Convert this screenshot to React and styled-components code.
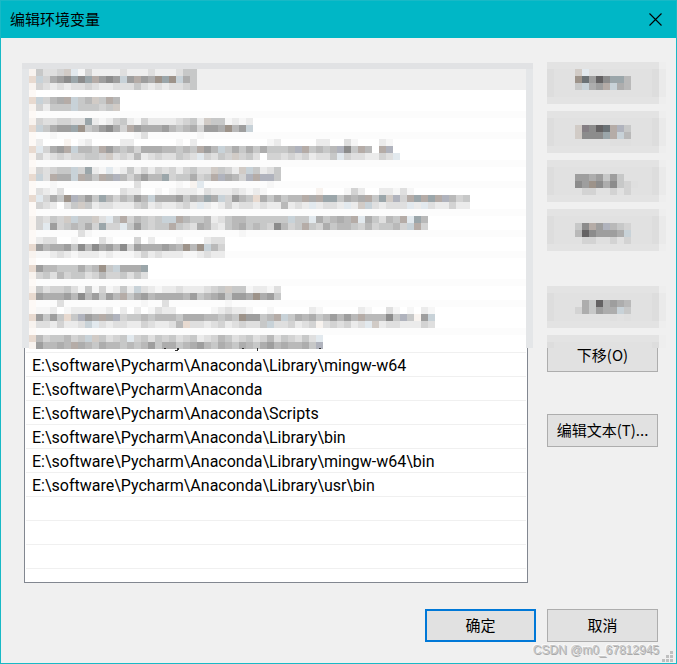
import React from 'react';
import styled, { createGlobalStyle } from 'styled-components';

const GlobalStyle = createGlobalStyle`
  * {
    box-sizing: border-box;
  }
  body {
    margin: 0;
    color: #000;
    font-family: 'Noto Sans CJK SC', 'Noto Sans', sans-serif;
    font-size: 15px;
  }
`;

const Dialog = styled.section`
  position: relative;
  display: flex;
  flex-direction: column;
  min-height: 100vh;
  background: #f0f0f0;
  border: 1px solid #18b9c6;
`;

const TitleBar = styled.header`
  display: flex;
  align-items: center;
  justify-content: space-between;
  height: 37px;
  padding: 0 8px 0 9px;
  background: #00b7c6;
  h1 {
    margin: 0;
    padding-bottom: 2px;
    font-size: 15px;
    font-weight: normal;
    line-height: 20px;
  }
`;

const CloseButton = styled.button`
  display: flex;
  padding: 6px;
  border: 0;
  background: transparent;
`;

const Content = styled.div`
  flex: 1;
  display: flex;
  gap: 19px;
  padding: 24px 18px 0 23px;
`;

const ListFrame = styled.div`
  position: relative;
  flex: 1;
  display: flex;
  margin-top: 2px;
`;

const PathList = styled.ul`
  flex: 1;
  margin: 0;
  padding: 0 1px;
  list-style: none;
  background: #fff;
  border: 1px solid #828790;
`;

const PathRow = styled.li`
  height: 24px;
  padding: 1px 0 0 6px;
  border-bottom: 1px solid #f0f0f0;
  font-family: Roboto, 'Noto Sans CJK SC', sans-serif;
  font-size: 16px;
  line-height: 24px;
  white-space: nowrap;
`;

// pixelated cover over the first rows of the list
const ListMosaic = styled.div`
  position: absolute;
  top: -1px;
  left: -2px;
  right: -5px;
  height: 288px;
  svg {
    display: block;
    width: 100%;
    height: 100%;
  }
`;

const SideColumn = styled.div`
  display: flex;
  flex-direction: column;
  gap: 7px;
  width: 111px;
`;

const DialogButton = styled.button`
  width: 111px;
  height: 33px;
  padding: 0 0 2px;
  background: #e1e1e1;
  border: ${({ $primary }) => ($primary ? '2px solid #0078d7' : '1px solid #adadad')};
  color: #000;
  font-family: inherit;
  font-size: 15px;
  line-height: 20px;
`;

const CoveredButton = styled.button`
  width: 119px;
  height: 42px;
  padding: 0;
  border: 0;
  background: transparent;
  svg {
    display: block;
  }
`;

const MoveUpSlot = styled.div`
  display: flex;
  margin-top: 28px;
`;

const MoveDownSlot = styled.div`
  position: relative;
  display: flex;
  margin: 4px 0 35px;
  > svg {
    position: absolute;
    top: -4px;
    left: 0;
  }
`;

const Footer = styled.footer`
  display: flex;
  justify-content: flex-end;
  gap: 11px;
  padding: 26px 18px 21px;
`;

const Watermark = styled.span`
  position: absolute;
  right: 17px;
  bottom: 5px;
  color: #c4c4c4;
  font-family: 'Liberation Sans', sans-serif;
  font-size: 12px;
  line-height: 16px;
  text-shadow: 1px 1px 0 #aaa, -1px -1px 0 #fafafa;
`;

const Grip = styled.svg`
  position: absolute;
  right: 3px;
  bottom: 1px;
`;

const CELL = 7;

const shades = {
  1: '#f6f6f6',
  2: '#ebebeb',
  3: '#dfdfdf',
  4: '#d3d3d3',
  5: '#c7c8c8',
  6: '#b9b9b9',
  7: '#adadad',
  8: '#9e9e9e',
  9: '#8c8c8c',
  p: '#f8f3ef',
  o: '#e8dad0',
  k: '#d1cbc6',
  w: '#b5aca7',
  d: '#9d938a',
  c: '#e2e9ee',
  b: '#c8d2d8',
  s: '#9ba6aa',
  v: '#b0b3bd',
  Z: '#857f84',
  Y: '#6b7276',
  X: '#646263',
};

// [grid row, shade of each cell]
const listCells = [
  [1, 'p5334kc14....3...3...355'],
  [2, 'ob4789s9sw898b8w87dsdb75'],
  [3, 'p43232334322333532323345'],
  [5, 'ob467wb56k5w6'],
  [6, 'p42555b55545k'],
  [8, 'p4334433s2124521422223452k551212'],
  [9, 'ob5788sd568974w8777865674887d68b'],
  [10, '...1...........13.......1'],
  [11, '.2...p.12....22......1.2..........12.....22..31...21'],
  [12, 'oc478wb665w8656477766565w86b5757575556vw5656v95w6.wv'],
  [13, 'p4234344554k343623433543c4354k453.4434342335c4332243c'],
  [15, 'p43455b4s21c12524243424533k542kb5235'],
  [16, 'ob3w77bw75w7v646866s455745wv764vwvv5'],
  [17, '...1...........3.....1.pc.........1'],
  [18, '.3213........322..1.12221322232121.......p...142..22131'],
  [19, 'oc475dv685s646586b7778576s7b4865o757566w7wss5767w5skv4wswswv645'],
  [20, '.432.35k5233222452322342c212423323226232c2332c2kb32333c2c322422'],
  [22, 'p4354kb55k3c5w46545bbw655623566555555b55c75676wc75365wcs6'],
  [23, 'p4c8456574s44c585455w543763256756549645w54756654645564bw4'],
  [24, '.......31.....................1'],
  [25, '.233..1...31...4.2...1...233'],
  [26, 'o867785969786948777876d6db64'],
  [27, 'p112321222121112423222112322'],
  [29, 'o866555756d5b777s'],
  [30, 'p4536455346445353'],
  [32, 'p53445315141252b321223222345k5512213'],
  [33, 'o877786968586w578677776856785887d785'],
  [34, '....3...........1..3........1'],
  [35, '.112.1222112.2.2.1322.....123221..1.....21.....21..31.1.21'],
  [36, 'o8585o5v87w7v45565666577766565d8856wb5767568686w66695v5p8b'],
  [37, 'p3324223bc323322432236o33234234335b334234p343423ck23322243'],
  [39, 'o6455645bk5345c45354534523465345346354353c'],
  [40, 'p86676w7657665656857756786576576578676675v'],
];

// separators between rows, blurred to full cells
const softBands = [7, 10, 14, 17, 21, 24, 27, 31, 34, 38];

const coveredButtons = [
  [[1, 'kc33'], [2, 'dY8X9ss6'], [3, '5b78wb76']],
  [[2, 'kZ9XYwv5'], [3, 'k999swb6'], [4, '.....333']],
  [[2, '8878585'], [3, '98d979543'], [4, '.44..4.4']],
  [[2, '59w8v654'], [3, '6X98887b'], [4, '.44334.4']],
];
const moveUpCells = [[2, '.75X7876'], [3, '475877b5'], [4, '.....3.3']];

const paths = [
  'E:\\software\\Pycharm\\Anaconda\\Library\\mingw-w64',
  'E:\\software\\Pycharm\\Anaconda',
  'E:\\software\\Pycharm\\Anaconda\\Scripts',
  'E:\\software\\Pycharm\\Anaconda\\Library\\bin',
  'E:\\software\\Pycharm\\Anaconda\\Library\\mingw-w64\\bin',
  'E:\\software\\Pycharm\\Anaconda\\Library\\usr\\bin',
];

const Cells = ({ rows, x, y }) =>
  rows.map(([row, cells]) =>
    [...cells].map((c, i) =>
      shades[c] ? (
        <rect
          key={`${row}-${i}`}
          x={x + i * CELL}
          y={y + row * CELL}
          width={CELL}
          height={CELL}
          fill={shades[c]}
        />
      ) : null
    )
  );

const CoveredListRows = () => (
  <ListMosaic>
    <svg aria-hidden="true" shapeRendering="crispEdges">
      <rect width="100%" height="285" fill="#e4e6e8" />
      <rect width="100%" height="6" fill="#e1e2e4" />
      <svg x="7" y="6" height="279" style={{ width: 'calc(100% - 14px)' }}>
        <rect width="100%" height="279" fill="#fff" />
        <rect width="100%" height="21" fill="#efefef" />
        {softBands.map(row => (
          <rect key={row} y={(row - 1) * CELL} width="100%" height={CELL} fill="#fcfcfc" />
        ))}
        <rect y="21" width="7" height="258" fill="#fdf9f6" />
        <Cells rows={listCells} x={0} y={-CELL} />
      </svg>
      {/* letter tails of the last covered row */}
      <g fill="#333">
        <rect x="142" y="285" width="2" height="1" />
        <rect x="155" y="285" width="2" height="2" />
        <rect x="153" y="287" width="3" height="1" />
        <rect x="220" y="285" width="2" height="1" />
        <rect x="235" y="285" width="1" height="3" />
        <rect x="297" y="285" width="2" height="1" />
      </g>
    </svg>
  </ListMosaic>
);

const PixelButton = ({ label, cells }) => (
  <CoveredButton type="button" aria-label={label}>
    <svg width="119" height="42" shapeRendering="crispEdges">
      <rect width="119" height="42" fill="#eeeeee" />
      <rect y="7" x="112" width="7" height="28" fill="#eaeaea" />
      <rect width="112" height="42" fill="#e3e3e3" />
      <rect y="7" width="112" height="28" fill="#dddddd" />
      <rect x="7" y="7" width="98" height="28" fill="#e1e1e1" />
      <Cells rows={cells} x={28} y={0} />
    </svg>
  </CoveredButton>
);

const App = () => (
  <>
    <GlobalStyle />
    <Dialog>
      <TitleBar>
        <h1>编辑环境变量</h1>
        <CloseButton type="button" aria-label="关闭">
          <svg width="13" height="13" stroke="#000" strokeWidth="1.1">
            <path d="M.5.5l12 12M12.5.5l-12 12" />
          </svg>
        </CloseButton>
      </TitleBar>

      <Content>
        <ListFrame>
          <PathList>
            {Array.from({ length: 12 }, (_, i) => (
              <PathRow key={`covered-${i}`} />
            ))}
            {paths.map(p => (
              <PathRow key={p}>{p}</PathRow>
            ))}
            <PathRow />
            <PathRow />
            <PathRow />
          </PathList>
          <CoveredListRows />
        </ListFrame>

        <SideColumn>
          {coveredButtons.map((cells, i) => (
            <PixelButton key={i} label={`按钮 ${i + 1}`} cells={cells} />
          ))}
          <MoveUpSlot>
            <PixelButton label="按钮 5" cells={moveUpCells} />
          </MoveUpSlot>
          <MoveDownSlot>
            <DialogButton type="button">下移(O)</DialogButton>
            <svg width="119" height="13" shapeRendering="crispEdges" aria-hidden="true">
              <rect width="119" height="13" fill="#eeeeee" />
              <rect width="112" height="13" fill="#e3e3e3" />
              <rect y="7" width="112" height="6" fill="#dddddd" />
              <rect x="7" y="7" width="98" height="6" fill="#e1e1e1" />
            </svg>
          </MoveDownSlot>
          <DialogButton type="button">编辑文本(T)...</DialogButton>
        </SideColumn>
      </Content>

      <Footer>
        <DialogButton type="button" $primary>
          确定
        </DialogButton>
        <DialogButton type="button">取消</DialogButton>
      </Footer>

      <Watermark>CSDN @m0_67812945</Watermark>
      <Grip width="11" height="11" fill="#bfbfbf" aria-hidden="true">
        <path d="M8 0h3v3h-3zM4 4h3v3h-3zM8 4h3v3h-3zM0 8h3v3h-3zM4 8h3v3h-3zM8 8h3v3h-3z" />
      </Grip>
    </Dialog>
  </>
);

export default App;
